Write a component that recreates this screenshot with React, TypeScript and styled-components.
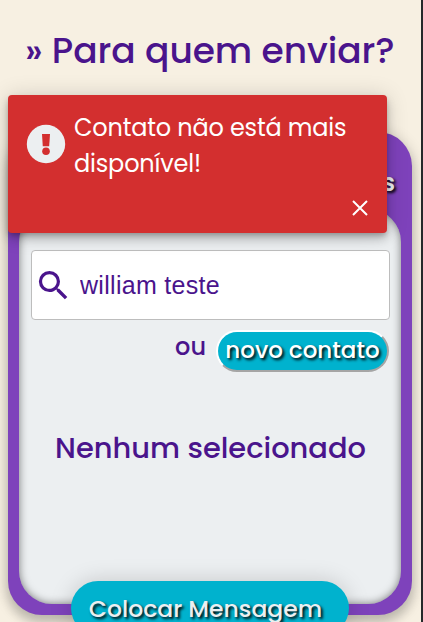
import React from "react";
import styled, { createGlobalStyle } from "styled-components";

const GlobalStyle = createGlobalStyle`
  *, *::before, *::after { box-sizing: border-box; }
  html, body { margin: 0; height: 100%; overflow: hidden; background: #26292b; }
  #root { height: 100%; }
`;

const Page = styled.main`
  position: relative;
  width: 421px;
  height: 622px;
  overflow: hidden;
  padding: 0 9px 0 8px;
  background: #f7f0e2;
  color: #4a148c;
  font-family: Poppins, Inter, "Liberation Sans", sans-serif;
`;

const Title = styled.h1`
  margin: 0;
  height: 132px;
  padding: 29px 0 0 17px;
  font-size: 36px;
  line-height: 43px;
  font-weight: 500;
  letter-spacing: -0.05px;
  white-space: nowrap;
`;

const Panel = styled.section`
  display: flex;
  flex-direction: column;
  width: 404px;
  height: 483px;
  padding: 0 11px 11px;
  border-radius: 34px;
  background: #7e42bb;
  box-shadow: 0 3px 14px 2px rgba(0, 0, 0, 0.16), 0 8px 10px 1px rgba(0, 0, 0, 0.12);
`;

const PanelHeader = styled.header`
  height: 77px;
  padding: 36px 6px 0 0;
  color: #eceff1;
  font-size: 24px;
  line-height: 30px;
  font-weight: 600;
  text-align: right;
  text-shadow: 2px 2px 3px #000;
`;

const Content = styled.div`
  display: flex;
  flex-direction: column;
  flex: 1;
  padding: 41px 11px 0 12px;
  border-radius: 33px;
  background: #eceff1;
  box-shadow: inset 0 0 9px rgba(0, 0, 0, 0.5);
`;

const SearchField = styled.label`
  display: flex;
  align-items: center;
  gap: 7px;
  height: 70px;
  padding-left: 2px;
  border: 1px solid #bdbdbd;
  border-radius: 4px;
  background: #fff;
`;

const SearchInput = styled.input`
  width: 290px;
  padding: 0;
  border: 0;
  outline: 0;
  background: transparent;
  color: #4a148c;
  font: 25px "Liberation Sans", Arial, sans-serif;
  letter-spacing: 0.3px;
`;

const NewContactRow = styled.div`
  display: flex;
  justify-content: flex-end;
  gap: 10px;
  margin-top: 10px;
  padding-right: 1px;
`;

const Or = styled.span`
  padding-top: 2px;
  font-size: 24px;
  line-height: 30px;
  font-weight: 500;
`;

const NewContactButton = styled.button`
  width: 173px;
  height: 42px;
  padding: 0 0 2px;
  border: 2px solid;
  border-color: #fff #a5a5a5 #a5a5a5 #fff;
  border-radius: 21px;
  background: #00b2ce;
  color: #fff;
  font: inherit;
  font-size: 23px;
  font-weight: 500;
  white-space: nowrap;
  text-shadow: 2px 2px 3px #000;
`;

const EmptyState = styled.p`
  margin: 57px 0 0;
  font-size: 28.9px;
  line-height: 38px;
  font-weight: 500;
  text-align: center;
  white-space: nowrap;
`;

const MessageButton = styled.button`
  position: absolute;
  left: 71px;
  top: 581px;
  width: 278px;
  height: 54px;
  padding: 0 9px 0 0;
  border: 0;
  border-radius: 27px;
  background: #00b2ce;
  color: #eceff1;
  font: inherit;
  font-size: 23.5px;
  font-weight: 500;
  white-space: nowrap;
  text-shadow: 2px 2px 3px #000;
  box-shadow: 0 0 22px rgba(0, 0, 0, 0.17);
`;

const Toast = styled.div`
  position: absolute;
  left: 8px;
  top: 95px;
  display: flex;
  flex-direction: column;
  width: 379px;
  height: 138px;
  padding: 15px 17px 0 18px;
  border-radius: 4px;
  background: #d32f2f;
  color: #fff;
  box-shadow: 0 3px 5px -1px rgba(0, 0, 0, 0.2), 0 6px 10px rgba(0, 0, 0, 0.18), 0 1px 22px rgba(0, 0, 0, 0.16);
`;

const ToastMessage = styled.div`
  display: flex;
  gap: 8px;
  height: 88px;
`;

const AlertIcon = styled.svg`
  flex: none;
  margin-top: 14px;
`;

const ToastText = styled.p`
  margin: 0;
  font-size: 24px;
  line-height: 36px;
  font-weight: 400;
  letter-spacing: -0.18px;
  white-space: pre-line;
`;

const CloseButton = styled.button`
  display: flex;
  align-self: flex-end;
  padding: 2px;
  border: 0;
  background: transparent;
  color: inherit;
`;

export default function App() {
  return (
    <>
      <GlobalStyle />
      <Page>
        <Title>» Para quem enviar?</Title>
        <Panel>
          <PanelHeader>s</PanelHeader>
          <Content>
            <SearchField>
              <svg width="39" height="39" viewBox="0 0 24 24" fill="#4a148c">
                <path d="M15.5 14h-.79l-.28-.27A6.47 6.47 0 0 0 16 9.5 6.5 6.5 0 1 0 9.5 16c1.61 0 3.09-.59 4.23-1.57l.27.28v.79l5 4.99L20.49 19l-4.99-5zm-6 0C7.01 14 5 11.99 5 9.5S7.01 5 9.5 5 14 7.01 14 9.5 11.99 14 9.5 14z" />
              </svg>
              <SearchInput defaultValue="william teste" spellCheck={false} />
            </SearchField>
            <NewContactRow>
              <Or>ou</Or>
              <NewContactButton>novo contato</NewContactButton>
            </NewContactRow>
            <EmptyState>Nenhum selecionado</EmptyState>
          </Content>
        </Panel>
        <MessageButton>Colocar Mensagem</MessageButton>
        <Toast role="alert">
          <ToastMessage>
            <AlertIcon width="40" height="40" viewBox="0 0 40 40">
              <circle cx="20" cy="20" r="19.2" fill="#eceff1" />
              <path d="M16 10h8l-.8 12.2h-6.4z" fill="#d32f2f" />
              <circle cx="20" cy="27.3" r="3.8" fill="#d32f2f" />
            </AlertIcon>
            <ToastText>{"Contato não está mais\ndisponível!"}</ToastText>
          </ToastMessage>
          <CloseButton aria-label="Fechar">
            <svg width="16" height="16" viewBox="0 0 16 16" stroke="#fff" strokeWidth="2" fill="none">
              <path d="M1 1l14 14M15 1L1 15" />
            </svg>
          </CloseButton>
        </Toast>
      </Page>
    </>
  );
}
